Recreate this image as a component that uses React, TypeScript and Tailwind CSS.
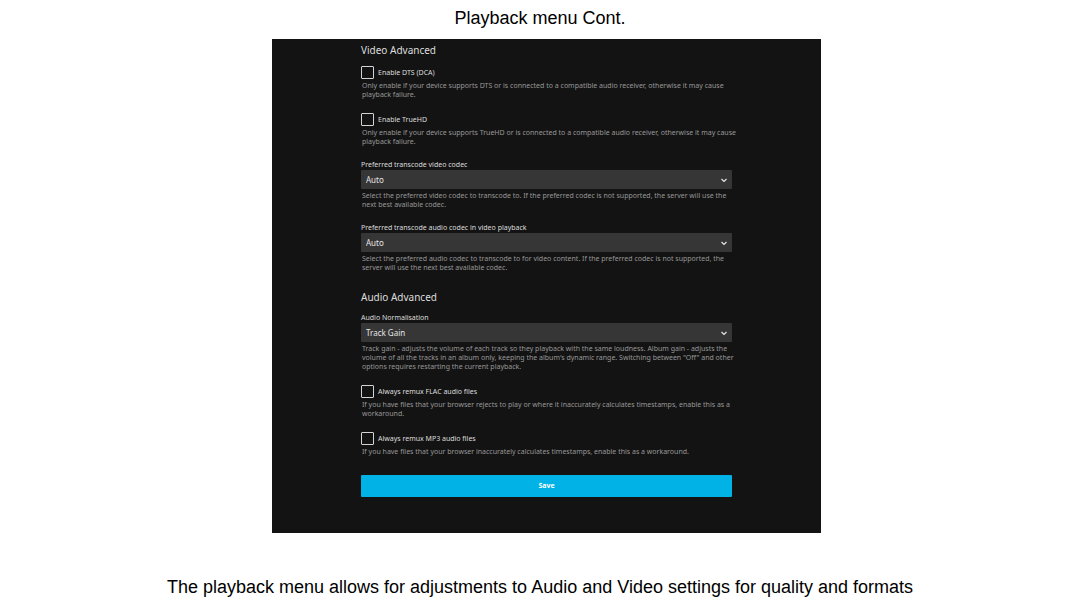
import { useId } from "react";
import type { ReactNode } from "react";

function Hint({ children }: { children: ReactNode }) {
  return <p className="-mr-1 pl-px text-[7px] leading-[9px] text-[#989898]">{children}</p>;
}

function CheckField({ label, children }: { label: string; children: ReactNode }) {
  const id = useId();
  return (
    <div>
      <div className="mb-0.5 flex h-[13px] items-center gap-1">
        <input
          id={id}
          type="checkbox"
          className="size-[13px] shrink-0 appearance-none rounded-[1px] border border-[#d4d4d4] checked:bg-[#00a4dc]"
        />
        <label htmlFor={id} className="text-[7px] leading-[13px] text-[#dddddd]">
          {label}
        </label>
      </div>
      <Hint>{children}</Hint>
    </div>
  );
}

function SelectField({ label, options, children }: { label: string; options: string[]; children: ReactNode }) {
  const id = useId();
  return (
    <div>
      <label htmlFor={id} className="block text-[7px] leading-[10px] text-[#dddddd]">
        {label}
      </label>
      <div className="relative mb-0.5">
        <select
          id={id}
          className="block h-[19px] w-full appearance-none rounded-[1px] bg-[#363636] px-[5px] text-[8px] text-[#e6e6e6]"
        >
          {options.map((o) => (
            <option key={o}>{o}</option>
          ))}
        </select>
        <svg
          viewBox="0 0 8 8"
          className="pointer-events-none absolute top-[6px] right-1 size-2"
          fill="none"
          stroke="#e6e6e6"
          strokeWidth="1.2"
        >
          <path d="M1.5 3 4 5.5 6.5 3" />
        </svg>
      </div>
      <Hint>{children}</Hint>
    </div>
  );
}

export default function App() {
  return (
    <main className="flex min-h-screen flex-col items-center bg-white pt-2 font-['Liberation_Sans',Arial,sans-serif] text-black">
      <h1 className="mb-[11px] text-[18px] leading-5">Playback menu Cont.</h1>
      <form
        className="ml-[13px] w-full max-w-[549px] bg-[#131313] px-[89px] pt-1 pb-9 font-['Noto_Sans',sans-serif]"
        onSubmit={(e) => e.preventDefault()}
      >
        <section className="flex flex-col gap-3.5">
          <h2 className="-mb-[5px] text-[10px] leading-[14px] text-[#dddddd]">Video Advanced</h2>
          <CheckField label="Enable DTS (DCA)">
            Only enable if your device supports DTS or is connected to a compatible audio receiver, otherwise it may cause playback failure.
          </CheckField>
          <CheckField label="Enable TrueHD">
            Only enable if your device supports TrueHD or is connected to a compatible audio receiver, otherwise it may cause playback failure.
          </CheckField>
          <SelectField label="Preferred transcode video codec" options={["Auto"]}>
            Select the preferred video codec to transcode to. If the preferred codec is not supported, the server will use the next best available codec.
          </SelectField>
          <SelectField label="Preferred transcode audio codec in video playback" options={["Auto"]}>
            Select the preferred audio codec to transcode to for video content. If the preferred codec is not supported, the server will use the next best available codec.
          </SelectField>
        </section>
        <section className="mt-[18px] flex flex-col gap-3.5">
          <h2 className="-mb-[5px] text-[10px] leading-[14px] text-[#dddddd]">Audio Advanced</h2>
          <SelectField label="Audio Normalisation" options={["Track Gain", "Album Gain", "Off"]}>
            Track gain - adjusts the volume of each track so they playback with the same loudness. Album gain - adjusts the volume of all the tracks in an album only, keeping the album's dynamic range. Switching between "Off" and other options requires restarting the current playback.
          </SelectField>
          <CheckField label="Always remux FLAC audio files">
            If you have files that your browser rejects to play or where it inaccurately calculates timestamps, enable this as a workaround.
          </CheckField>
          <CheckField label="Always remux MP3 audio files">
            If you have files that your browser inaccurately calculates timestamps, enable this as a workaround.
          </CheckField>
        </section>
        <button type="submit" className="mt-[19px] block h-[22px] w-full rounded-[1px] bg-[#00b2e5] text-[7px] font-bold text-white">
          Save
        </button>
      </form>
      <p className="mt-11 text-[18px] leading-5">
        The playback menu allows for adjustments to Audio and Video settings for quality and formats
      </p>
    </main>
  );
}
